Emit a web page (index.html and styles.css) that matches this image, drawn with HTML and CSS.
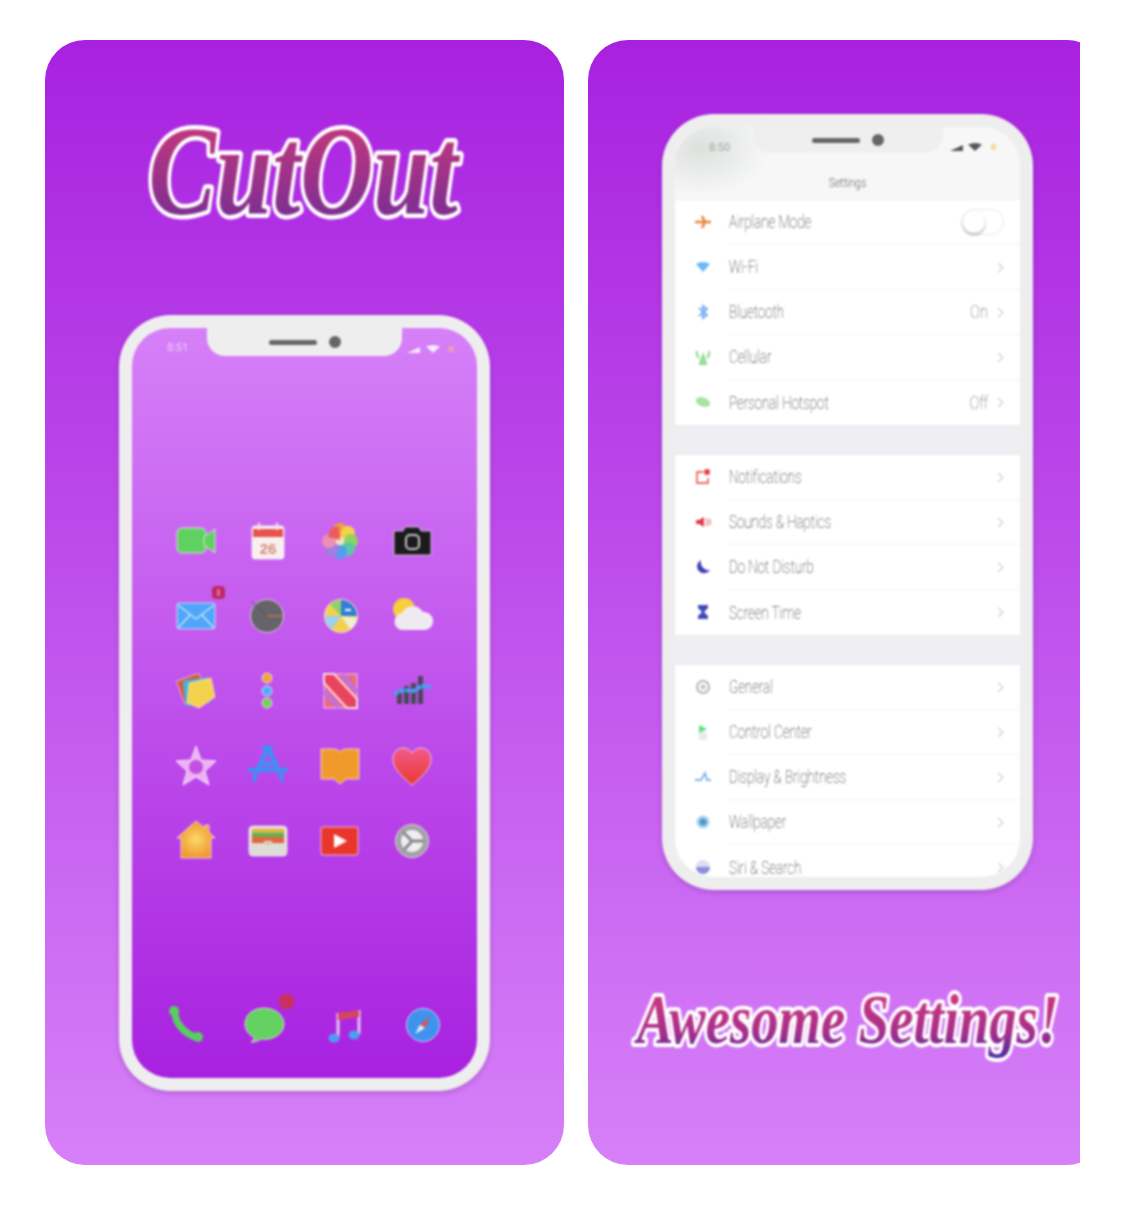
FILE: index.html
```html
<!DOCTYPE html>
<html lang="en">
<head>
<meta charset="utf-8">
<title>CutOut</title>
<link rel="stylesheet" href="styles.css">
</head>
<body>
<main class="gallery">
  <section class="card card--home">
    <svg class="title title--cutout" viewBox="0 0 330 112" aria-label="CutOut">
      <defs><linearGradient id="g1" x1="0" y1="0" x2="0" y2="1"><stop offset="0" stop-color="#d63a76"/><stop offset="1" stop-color="#6a2c98"/></linearGradient></defs>
      <text class="title__text title__text--big" transform="translate(163 96) scale(.79 1)" text-anchor="middle" fill="url(#g1)">CutOut</text>
    </svg>
    <div class="phone">
      <div class="screen screen--home">
        <div class="status status--home">
          <span class="status__time">8:51</span>
          <div class="notch"><i class="notch__speaker"></i><i class="notch__camera"></i></div>
          <div class="status__icons">
            <svg width="50" height="10" viewBox="0 0 50 10"><path d="M0 9 13 3V9Z" fill="#f4e6fb"/><path d="M19 2.500Q26 -.5 33 2.500L26 9Z" fill="#f6ecfc"/><rect x="41" y="2" width="6" height="6" rx="1" fill="#e89ac0"/></svg>
          </div>
        </div>
        <div class="apps">
          <svg class="icon" viewBox="0 0 48 48"><g class="edge"><rect x="5" y="11" width="29" height="25" rx="5" fill="#5fd160"/><path d="M32 20 43 12V36L32 28Z" fill="#5fd160"/></g></svg>
          <svg class="icon" viewBox="0 0 48 48"><rect x="8" y="9" width="32" height="33" rx="3" fill="#f8f0ee" class="edge"/><rect x="9" y="12" width="30" height="8" fill="#e8524c"/><path d="M15 6V13M33 6V13" stroke="#f4dcdc" stroke-width="2.500"/><text class="cal" x="24" y="37" text-anchor="middle">26</text></svg>
          <svg class="icon" viewBox="0 0 48 48"><circle cx="24" cy="24" r="12" fill="#f2e0c8"/><circle cx="24" cy="13" r="7" fill="#f2a33a"/><circle cx="32" cy="16" r="7" fill="#f5d24a"/><circle cx="35" cy="24" r="7" fill="#8fd45c"/><circle cx="32" cy="32" r="7" fill="#5cc6a8"/><circle cx="24" cy="35" r="7" fill="#4f9ff2"/><circle cx="16" cy="32" r="7" fill="#a07fe0"/><circle cx="13" cy="24" r="7" fill="#ef8fb4"/><path d="M24 23 12 20 15 11 23 9Z" fill="#ee5d55"/></svg>
          <svg class="icon" viewBox="0 0 48 48"><path class="edge" d="M6 14H15L17 10H31L33 14H43V38H6Z" fill="#1b1a1c"/><rect x="18" y="18" width="13" height="14" rx="4" fill="none" stroke="#c8c8c8" stroke-width="2"/></svg>

          <svg class="icon" viewBox="0 0 48 48"><rect class="edge" x="5" y="11" width="38" height="26" rx="2" fill="#4fa6f8"/><path d="M6 13 24 27 42 13M6 36 18 23M42 36 30 23" stroke="#cfe6ff" stroke-width="1.200" fill="none"/><rect x="40" y="-6" width="13" height="13" rx="4" fill="#c02668"/><rect x="45" y="-3" width="3" height="7" fill="#e06a98"/></svg>
          <svg class="icon" viewBox="0 0 48 48"><circle class="edge" cx="23" cy="24" r="16.500" fill="#66646a"/><path d="M23 24H39" stroke="#e0814a" stroke-width="1"/><path d="M23 24 8 10" stroke="#55505a" stroke-width="1"/></svg>
          <svg class="icon" viewBox="0 0 48 48"><circle class="edge" cx="25" cy="24" r="16.500" fill="#f3d050"/><path d="M25 24V8A16 16 0 0 1 41 24Z" fill="#2f7fd6"/><path d="M25 24 14 12A16 16 0 0 1 25 8Z" fill="#8fd06a"/><path d="M25 24H9A16 16 0 0 0 16 37Z" fill="#9ad0f2"/><path d="M25 24 41 26A16 16 0 0 1 34 37Z" fill="#f0f0d0"/><path d="M29 18H35" stroke="#fff" stroke-width="2"/></svg>
          <svg class="icon" viewBox="0 0 48 48"><circle cx="16" cy="17" r="11" fill="#f7ce3e"/><path d="M16 38A8.500 8.500 0 0 1 14 21 12 12 0 0 1 35 20 9 9 0 0 1 37 38Z" fill="#efeaf0"/></svg>

          <svg class="icon" viewBox="0 0 48 48"><rect x="8" y="9" width="24" height="25" rx="2" fill="#d65a3a" transform="rotate(-20 21 22)" stroke="#fff8"/><rect x="12" y="12" width="25" height="26" rx="2" fill="#4ab0d8" transform="rotate(-8 24 25)"/><path d="M17 16 39 11 43 30 27 41 15 36Z" fill="#f5d24c" stroke="#fff8" stroke-width="1"/></svg>
          <svg class="icon" viewBox="0 0 48 48"><circle class="edge" cx="23" cy="11" r="5" fill="#f0a43c"/><circle class="edge" cx="23" cy="24" r="5" fill="#4fb0f2"/><circle class="edge" cx="23" cy="36" r="5" fill="#76cf58"/></svg>
          <svg class="icon" viewBox="0 0 48 48"><rect class="edge" x="8" y="7" width="33" height="34" fill="#ec6a82"/><path d="M8 7H18L41 32V41H31L8 16Z" fill="#e8445e" stroke="#fff" stroke-width="1.500"/><path d="M26 8 41 25M8 24 23 40" stroke="#c070e0" stroke-width="5"/></svg>
          <svg class="icon" viewBox="0 0 48 48"><path d="M9 37V25H14V37ZM16 37V19H21V37ZM23 37V16H28V37ZM30 37V9H35V37Z" fill="#4a4856"/><path d="M6 27 16 23 25 24 34 19 43 20" stroke="#3ea6f5" stroke-width="4" fill="none" stroke-dasharray="5 1"/></svg>

          <svg class="icon" viewBox="0 0 48 48"><path d="M24 4 29 18 44 19 33 29 37 43 24 35 11 43 15 29 4 19 19 18Z" fill="#ecb1f5" stroke="#fff" stroke-opacity=".8"/><circle cx="24" cy="25" r="7" fill="#c44fe0"/></svg>
          <svg class="icon" viewBox="0 0 48 48"><path d="M20 6H27M24 6 12 31M24 6 36 31M17 22H31M6 28H42" fill="none" stroke="#3f8ff6" stroke-width="4.500" stroke-linecap="round"/><path d="M12 29 10 38M36 29 38 38" stroke="#3f8ff6" stroke-width="4" stroke-linecap="round"/></svg>
          <svg class="icon" viewBox="0 0 48 48"><path class="edge" d="M5 7H18Q22 7 24 10 26 7 30 7H43V37H30L24 42 18 37H5Z" fill="#f09a2c"/></svg>
          <svg class="icon" viewBox="0 0 48 48"><defs><linearGradient id="heart" x1="0" y1="0" x2="0" y2="1"><stop offset="0" stop-color="#f25a8a"/><stop offset="1" stop-color="#ea3a30"/></linearGradient></defs><path class="edge" d="M24 43C12 33 5 26 5 17 5 10 10 6 15 6 19 6 22 8 24 11 26 8 29 6 33 6 38 6 43 10 43 17 43 26 36 33 24 43Z" fill="url(#heart)"/></svg>

          <svg class="icon" viewBox="0 0 48 48"><defs><radialGradient id="house"><stop offset="0" stop-color="#fbd96a"/><stop offset="1" stop-color="#f0972e"/></radialGradient></defs><path class="edge" d="M24 4 33 11V8H37V15L43 21H39V41H9V21H5Z" fill="url(#house)"/></svg>
          <svg class="icon" viewBox="0 0 48 48"><rect class="edge" x="5" y="9" width="38" height="30" rx="4" fill="#dedcd4"/><rect x="8" y="12" width="32" height="4" fill="#e2b43c"/><rect x="8" y="16" width="32" height="4" fill="#5bb35a"/><rect x="8" y="20" width="32" height="4" fill="#e8643c"/><path d="M8 24H19Q24 30 29 24H40V26H8Z" fill="#e0603c"/></svg>
          <svg class="icon" viewBox="0 0 48 48"><rect class="edge" x="5" y="10" width="37" height="28" rx="2" fill="#e9352a"/><path d="M18 17 31 24 18 31Z" fill="#fff"/></svg>
          <svg class="icon" viewBox="0 0 48 48"><circle class="edge" cx="24" cy="24" r="16.500" fill="#a2a2a4"/><circle cx="24" cy="24" r="11" fill="#f0eef0"/><path d="M24 24 15 15M24 24H36M24 24 16 33" stroke="#88888b" stroke-width="3"/></svg>
        </div>
        <div class="dock">
          <svg class="icon" viewBox="0 0 48 48"><path d="M13 11C13 22 22 33 36 37" fill="none" stroke="#58ce5f" stroke-width="7" stroke-linecap="round"/><circle cx="12" cy="10" r="5" fill="#58ce5f"/><circle cx="36" cy="36" r="5" fill="#58ce5f"/></svg>
          <svg class="icon" viewBox="0 0 48 48"><path class="edge" d="M23 7C12 7 4 14 4 23 4 29 8 34 13 36 13 38 12 40 10 41 14 41 18 40 20 38 28 40 43 35 43 23 43 14 34 7 23 7Z" fill="#65d160"/><rect x="38" y="-7" width="15" height="15" rx="6" fill="#c9305f"/></svg>
          <svg class="icon" viewBox="0 0 48 48"><path d="M18 12V36M39 9V33" stroke="#e6c4f2" stroke-width="3"/><path d="M18 12 39 9V16L18 19Z" fill="#d8445e"/><ellipse cx="14" cy="37" rx="5.500" ry="4.500" fill="#4f9df0"/><ellipse cx="34" cy="34" rx="5.500" ry="4.500" fill="#4f9df0"/></svg>
          <svg class="icon" viewBox="0 0 48 48"><circle class="edge" cx="24" cy="24" r="16.500" fill="#3f93ee"/><path d="M31 15 26 27 21 24Z" fill="#e2544c"/><path d="M21 24 26 27 16 33Z" fill="#eef"/></svg>
        </div>
      </div>
    </div>
  </section>

  <section class="card card--settings">
    <div class="phone">
      <div class="screen screen--settings">
        <header class="head">
          <div class="status status--settings">
            <span class="status__time status__time--dark">8:50</span>
            <div class="notch notch--settings"><i class="notch__speaker"></i><i class="notch__camera"></i></div>
            <div class="status__icons">
              <svg width="50" height="10" viewBox="0 0 50 10"><path d="M0 9 13 3V9Z" fill="#555"/><path d="M18 2.500Q25 -.5 32 2.500L25 9Z" fill="#555"/><rect x="41" y="2" width="5" height="6" rx="1" fill="#f5dc9a"/></svg>
            </div>
          </div>
          <h1 class="head__title">Settings</h1>
        </header>

        <div class="group">
          <div class="row"><svg class="row__icon" viewBox="0 0 18 18"><path d="M1 9H17M8 3 11 9 8 15" stroke="#e8833a" stroke-width="2.500" fill="none"/></svg><div class="row__body"><span class="row__label">Airplane Mode</span><span class="toggle"><i class="toggle__knob"></i></span></div></div>
          <div class="row"><svg class="row__icon" viewBox="0 0 18 18"><path d="M2 6Q9 2 16 6L9 14Z" fill="#6cb8f8"/></svg><div class="row__body"><span class="row__label">Wi-Fi</span><i class="chev"></i></div></div>
          <div class="row"><svg class="row__icon" viewBox="0 0 18 18"><path d="M5 5 13 12 9 15V3L13 6 5 13" fill="none" stroke="#7aaef5" stroke-width="2"/></svg><div class="row__body"><span class="row__label">Bluetooth</span><span class="row__value">On</span><i class="chev"></i></div></div>
          <div class="row"><svg class="row__icon" viewBox="0 0 18 18"><path d="M9 7 6 16H12ZM3 3Q2 7 5 10M15 3Q16 7 13 10" fill="#a8e4a8" stroke="#8cd88c" stroke-width="2"/></svg><div class="row__body"><span class="row__label">Cellular</span><i class="chev"></i></div></div>
          <div class="row"><svg class="row__icon" viewBox="0 0 18 18"><ellipse cx="9" cy="9" rx="7.500" ry="4.500" fill="#a6e4a0" transform="rotate(20 9 9)"/></svg><div class="row__body"><span class="row__label">Personal Hotspot</span><span class="row__value">Off</span><i class="chev"></i></div></div>
        </div>

        <div class="group">
          <div class="row"><svg class="row__icon" viewBox="0 0 18 18"><path d="M9 4H3V15H14V10" fill="none" stroke="#ec6a60" stroke-width="1.800"/><circle cx="13" cy="4" r="3" fill="#e83a3a"/></svg><div class="row__body"><span class="row__label">Notifications</span><i class="chev"></i></div></div>
          <div class="row"><svg class="row__icon" viewBox="0 0 18 18"><path d="M2 7H5L10 4V14L5 11H2Z" fill="#e03a44"/><path d="M13 5V13M16 6V12" stroke="#ee9a9a" stroke-width="1.800"/></svg><div class="row__body"><span class="row__label">Sounds &amp; Haptics</span><i class="chev"></i></div></div>
          <div class="row"><svg class="row__icon" viewBox="0 0 18 18"><path d="M7 2A7 7 0 1 0 16 12 8 8 0 0 1 7 2Z" fill="#3f3fb8"/></svg><div class="row__body"><span class="row__label">Do Not Disturb</span><i class="chev"></i></div></div>
          <div class="row"><svg class="row__icon" viewBox="0 0 18 18"><path d="M4 2H14V5L10 9 14 13V16H4V13L8 9 4 5Z" fill="#3f48b8"/></svg><div class="row__body"><span class="row__label">Screen Time</span><i class="chev"></i></div></div>
        </div>

        <div class="group">
          <div class="row"><svg class="row__icon" viewBox="0 0 18 18"><circle cx="9" cy="9" r="6" fill="none" stroke="#b4b4b4" stroke-width="2"/><circle cx="9" cy="9" r="2.500" fill="#c4c4c4"/></svg><div class="row__body"><span class="row__label">General</span><i class="chev"></i></div></div>
          <div class="row"><svg class="row__icon" viewBox="0 0 18 18"><rect x="5" y="9" width="8" height="8" fill="#eaeaea"/><path d="M5 2 13 6 5 10Z" fill="#5ee07a"/></svg><div class="row__body"><span class="row__label">Control Center</span><i class="chev"></i></div></div>
          <div class="row"><svg class="row__icon" viewBox="0 0 18 18"><path d="M1 12H7L11 5 13 12H17" fill="none" stroke="#7fb0f0" stroke-width="1.800"/></svg><div class="row__body"><span class="row__label">Display &amp; Brightness</span><i class="chev"></i></div></div>
          <div class="row"><svg class="row__icon" viewBox="0 0 18 18"><circle cx="9" cy="9" r="6.500" fill="#a6d4ee"/><circle cx="9" cy="9" r="3.500" fill="#4f98c8"/></svg><div class="row__body"><span class="row__label">Wallpaper</span><i class="chev"></i></div></div>
          <div class="row"><svg class="row__icon" viewBox="0 0 18 18"><circle cx="9" cy="9" r="7" fill="#dcdcf4"/><path d="M2 9A7 7 0 0 0 16 9Z" fill="#8c8cdc"/></svg><div class="row__body"><span class="row__label">Siri &amp; Search</span><i class="chev"></i></div></div>
        </div>
      </div>
    </div>
    <svg class="title title--awesome" viewBox="0 0 440 100" aria-label="Awesome Settings!">
      <defs><linearGradient id="g2" x1="0" y1="0" x2="0" y2="1"><stop offset="0" stop-color="#d83a7c"/><stop offset=".65" stop-color="#a92e8a"/><stop offset="1" stop-color="#4b2aa0"/></linearGradient></defs>
      <text class="title__text title__text--small" transform="translate(220 58) scale(.78 1)" text-anchor="middle" fill="url(#g2)">Awesome Settings!</text>
    </svg>
  </section>
</main>
</body>
</html>
```

FILE: styles.css
```css
* { box-sizing: border-box; }

html, body { margin: 0; background: #fff; }

body { height: 1216px; overflow: hidden; }

.gallery {
  display: flex;
  gap: 24px;
  width: 1035px;
  margin: 40px 0 0 45px;
  overflow: hidden;
}

.card {
  flex: none;
  display: flex;
  flex-direction: column;
  align-items: center;
  width: 519px;
  height: 1125px;
  border-radius: 40px;
  background: linear-gradient(180deg, #a821e0 0%, #d680f8 100%);
}

.card--home { padding-top: 78px; }
.card--settings { padding-top: 74px; }

.title { display: block; flex: none; overflow: visible; filter: blur(.8px); }
.title--cutout { width: 330px; height: 112px; margin-bottom: 85px; }
.title--awesome { width: 440px; height: 100px; margin-top: 95px; }

.title__text {
  font-family: "Liberation Serif", "DejaVu Serif", serif;
  font-style: italic;
  font-weight: 700;
  paint-order: stroke;
  stroke: #fff;
  stroke-linejoin: round;
}
.title__text--big { font-size: 128px; stroke-width: 9px; }
.title__text--small { font-size: 70px; stroke-width: 8px; }

.phone {
  flex: none;
  width: 371px;
  height: 776px;
  padding: 13px;
  border-radius: 52px;
  background: #eeeeee;
  box-shadow: 0 2px 5px rgba(70, 20, 90, .25);
  filter: blur(.8px);
}

.screen {
  display: flex;
  flex-direction: column;
  height: 100%;
  overflow: hidden;
  border-radius: 38px;
}
.screen--home { background: linear-gradient(180deg, #d680f8 0%, #a821e0 100%); }
.screen--settings { background: #eeeef3; }

.status { flex: none; display: flex; align-items: flex-start; height: 29px; }
.status__time {
  flex: none;
  width: 75px;
  padding: 13px 0 0 35px;
  font: 11px/14px Roboto, "Liberation Sans", sans-serif;
  color: #eecdfb;
}
.status__time--dark { width: 78px; color: #a5a5a5; padding-left: 34px; padding-top: 14px; }
.status__icons { flex: 1; display: flex; justify-content: flex-end; padding: 16px 20px 0 0; }

.notch {
  flex: none;
  display: flex;
  justify-content: center;
  align-items: center;
  gap: 12px;
  width: 195px;
  height: 28px;
  border-radius: 0 0 18px 18px;
  background: #eeeeee;
}
.notch__speaker { width: 48px; height: 5px; border-radius: 3px; background: #666; }
.notch__camera { width: 12px; height: 12px; border-radius: 50%; background: #666; }

.apps {
  flex: none;
  display: grid;
  grid-template-columns: repeat(4, 72px);
  grid-auto-rows: 75px;
  justify-content: center;
  justify-items: center;
  align-items: center;
  margin-top: 146px;
  padding-right: 2px;
}

.icon { display: block; width: 48px; height: 48px; overflow: visible; }
.edge { stroke: #fff; stroke-opacity: .65; stroke-width: 1px; }
.cal { font: 700 15px "Liberation Sans", sans-serif; fill: #d98a84; }

.dock {
  flex: none;
  display: flex;
  justify-content: center;
  gap: 31px;
  margin-top: auto;
  padding-bottom: 29px;
}

.head {
  flex: none;
  height: 73px;
  background: radial-gradient(ellipse 70px 50px at 25px 20px, #dde1dd 0%, #f7f7f8 100%);
  border-bottom: 1px solid #efeff1;
}
.status--settings { height: 26px; }
.status--settings .status__icons { padding-top: 15px; }
.notch--settings { height: 26px; width: 190px; background: #efefef; }
.head__title {
  margin: 22px 0 0;
  display: block;
  text-align: center;
  font: 300 13px/16px Roboto, "Liberation Sans", sans-serif;
  color: #6a6a6a;
  transform: scaleX(.8);
}

.group { flex: none; background: #fff; }
.group + .group { margin-top: 30px; }

.row { display: flex; align-items: stretch; height: 45px; padding-left: 19px; }
.row__icon { flex: none; width: 18px; height: 18px; margin: 13px 17px 0 0; }
.row__body {
  flex: 1;
  display: flex;
  align-items: center;
  gap: 7px;
  padding-right: 16px;
  border-bottom: 1px solid #f2f2f4;
}
.group > .row:last-child .row__body { border-bottom: 0; }
.row__label {
  flex: 1;
  font: 100 18px/20px Roboto, "Liberation Sans", sans-serif;
  color: #222;
  transform: scaleX(.74);
  transform-origin: left center;
}
.row__value {
  font: 100 18px/20px Roboto, "Liberation Sans", sans-serif;
  color: #555;
  transform: scaleX(.8);
  transform-origin: right center;
}
.chev {
  width: 7px;
  height: 7px;
  margin-right: 2px;
  border-top: 1.2px solid #c6c6c6;
  border-right: 1.2px solid #c6c6c6;
  transform: rotate(45deg);
}
.toggle {
  display: block;
  width: 43px;
  height: 26px;
  padding: 1px;
  border: 1px solid #e8e8e8;
  border-radius: 13px;
  background: #fff;
}
.toggle__knob {
  display: block;
  width: 22px;
  height: 22px;
  border-radius: 50%;
  background: #fff;
  box-shadow: 0 2px 3px rgba(0, 0, 0, .28);
}
```
